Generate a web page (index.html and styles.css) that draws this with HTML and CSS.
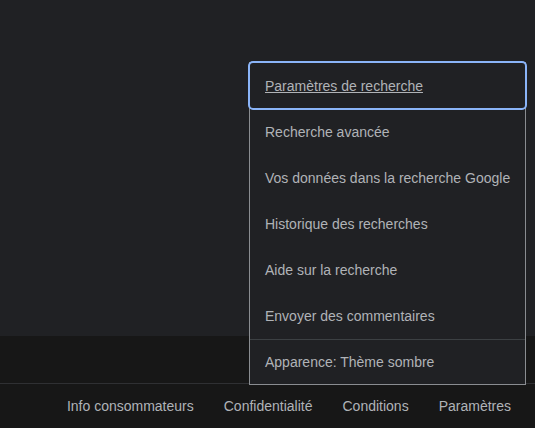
FILE: index.html
```html
<!DOCTYPE html>
<html lang="fr">
<head>
<meta charset="utf-8">
<link rel="stylesheet" href="styles.css">
</head>
<body>
<div class="page">
  <main class="main"></main>
  <div class="band"></div>
  <footer class="footer">
    <a class="flink" href="#">Info consommateurs</a>
    <a class="flink" href="#">Confidentialité</a>
    <a class="flink" href="#">Conditions</a>
    <a class="flink" href="#">Paramètres</a>
  </footer>
  <div class="menu">
    <a class="item focused" href="#"><span class="u">Paramètres de recherche</span></a>
    <a class="item" href="#">Recherche avancée</a>
    <a class="item" href="#">Vos données dans la recherche Google</a>
    <a class="item" href="#">Historique des recherches</a>
    <a class="item" href="#">Aide sur la recherche</a>
    <a class="item" href="#">Envoyer des commentaires</a>
    <a class="item last" href="#">Apparence: Thème sombre</a>
  </div>
</div>
</body>
</html>
```
FILE: styles.css
```css
html, body {
  margin: 0;
  padding: 0;
  height: 100%;
  background: #202124;
  font-family: "Liberation Sans", Arial, sans-serif;
}
.page {
  position: relative;
  height: 428px;
  display: flex;
  flex-direction: column;
  overflow: hidden;
}
.main {
  height: 336px;
  background: #202124;
}
.band {
  height: 47px;
  background: #171717;
}
.footer {
  flex: 1;
  background: #171717;
  border-top: 1px solid #2f3033;
  display: flex;
  justify-content: flex-end;
  align-items: center;
  padding-right: 9px;
}
.flink {
  color: #b0b3b7;
  font-size: 14px;
  text-decoration: none;
  padding: 0 15px;
}
.menu {
  position: absolute;
  left: 249px;
  top: 62px;
  width: 275px;
  background: #202124;
  border: 1px solid #8a8d91;
  border-top: none;
  display: flex;
  flex-direction: column;
}
.item {
  height: 46px;
  display: flex;
  align-items: center;
  padding-left: 15px;
  color: #b0b3b7;
  font-size: 14px;
  text-decoration: none;
}
.item.focused {
  height: 47px;
  outline: 2px solid #8ab4f8;
  outline-offset: -1px;
  border-radius: 4px;
  margin: 0 -1px;
  padding-left: 16px;
}
.u {
  text-decoration: underline;
}
.item.last {
  border-top: 1px solid #3c4043;
  height: 44px;
}
```
